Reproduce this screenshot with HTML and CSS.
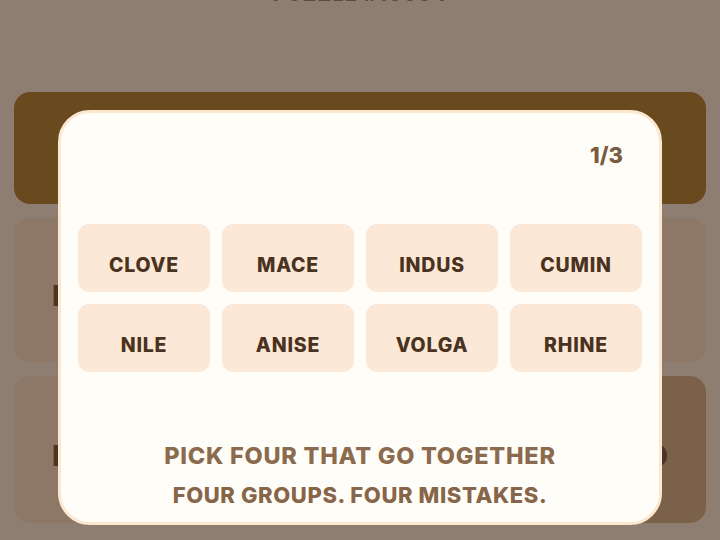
FILE: index.html
```html
<!DOCTYPE html>
<html lang="en">
<head>
<meta charset="UTF-8">
<meta name="viewport" content="width=device-width, initial-scale=1.0">
<title>Connections</title>
<link rel="stylesheet" href="styles.css">
</head>
<body>

<div class="page">
    <div class="puzzle-title">PUZZLE #10054</div>
    <div class="banner"></div>
    <div class="board">
        <div class="board-tile"><span>INDUS</span></div>
        <div class="board-tile"><span>NILE</span></div>
        <div class="board-tile"><span>MACE</span></div>
        <div class="board-tile picked"><span>GOLD</span></div>
    </div>
</div>

<div class="overlay">
    <div class="modal">
        <div class="step">1/3</div>
        <div class="grid">
            <div class="tile">CLOVE</div>
            <div class="tile">MACE</div>
            <div class="tile">INDUS</div>
            <div class="tile">CUMIN</div>
            <div class="tile">NILE</div>
            <div class="tile">ANISE</div>
            <div class="tile">VOLGA</div>
            <div class="tile">RHINE</div>
        </div>
        <div class="hint">PICK FOUR THAT GO TOGETHER</div>
        <div class="rules">FOUR GROUPS. FOUR MISTAKES.</div>
    </div>
</div>

</body>
</html>
```

FILE: styles.css
```css
body {
    margin: 0;
    padding: 0;
    font-family: Inter, "Noto Sans", sans-serif;
    background-color: #8e7e71;
    width: 720px;
    height: 540px;
    overflow: hidden;
}
.page {
    padding: 0 14px;
}
.page::before {
    content: "";
    display: block;
    height: 1px;
}
.puzzle-title {
    height: 24px;
    margin-top: -19px;
    line-height: 24px;
    text-align: center;
    font-size: 20px;
    font-weight: 800;
    letter-spacing: 1.2px;
    color: #5c4a3f;
}
.banner {
    margin-top: 86px;
    height: 112px;
    background-color: #694a1e;
    border-radius: 16px;
}
.board {
    margin-top: 14px;
    display: grid;
    grid-template-columns: 1fr 1fr;
    grid-template-rows: 144px 147px;
    gap: 14px;
}
.board-tile {
    background-color: #8d7867;
    border-radius: 16px;
    display: flex;
    align-items: center;
    padding: 12px 38px 0;
    font-size: 28px;
    font-weight: 800;
    color: #4a3425;
}
.board-tile.picked {
    justify-content: flex-end;
    background-color: #7b6149;
}
.overlay {
    position: fixed;
    top: 0;
    left: 0;
    right: 0;
    bottom: 0;
    display: flex;
    justify-content: center;
    align-items: flex-start;
    padding-top: 110px;
}
.modal {
    width: 564px;
    height: 392px;
    padding: 0 17px 17px;
    background-color: #fffdf8;
    border: 3px solid #fce7d1;
    border-radius: 32px;
}
.step {
    margin-top: 29px;
    padding-right: 19px;
    text-align: right;
    font-size: 22px;
    line-height: 27px;
    font-weight: 800;
    color: #7a5a40;
}
.grid {
    margin-top: 55px;
    display: grid;
    grid-template-columns: repeat(4, 1fr);
    gap: 12px;
}
.tile {
    height: 68px;
    box-sizing: border-box;
    padding-top: 29px;
    line-height: 24px;
    text-align: center;
    background-color: #fce8d6;
    border-radius: 11px;
    font-size: 19.5px;
    font-weight: 800;
    letter-spacing: 0.8px;
    color: #4a3221;
}
.hint {
    margin-top: 69px;
    text-align: center;
    font-size: 23.5px;
    line-height: 29px;
    font-weight: 800;
    letter-spacing: 0.75px;
    color: #8b6a4d;
}
.rules {
    margin-top: 12px;
    text-align: center;
    font-size: 22px;
    line-height: 26px;
    font-weight: 800;
    letter-spacing: 0.6px;
    color: #876549;
}
```
